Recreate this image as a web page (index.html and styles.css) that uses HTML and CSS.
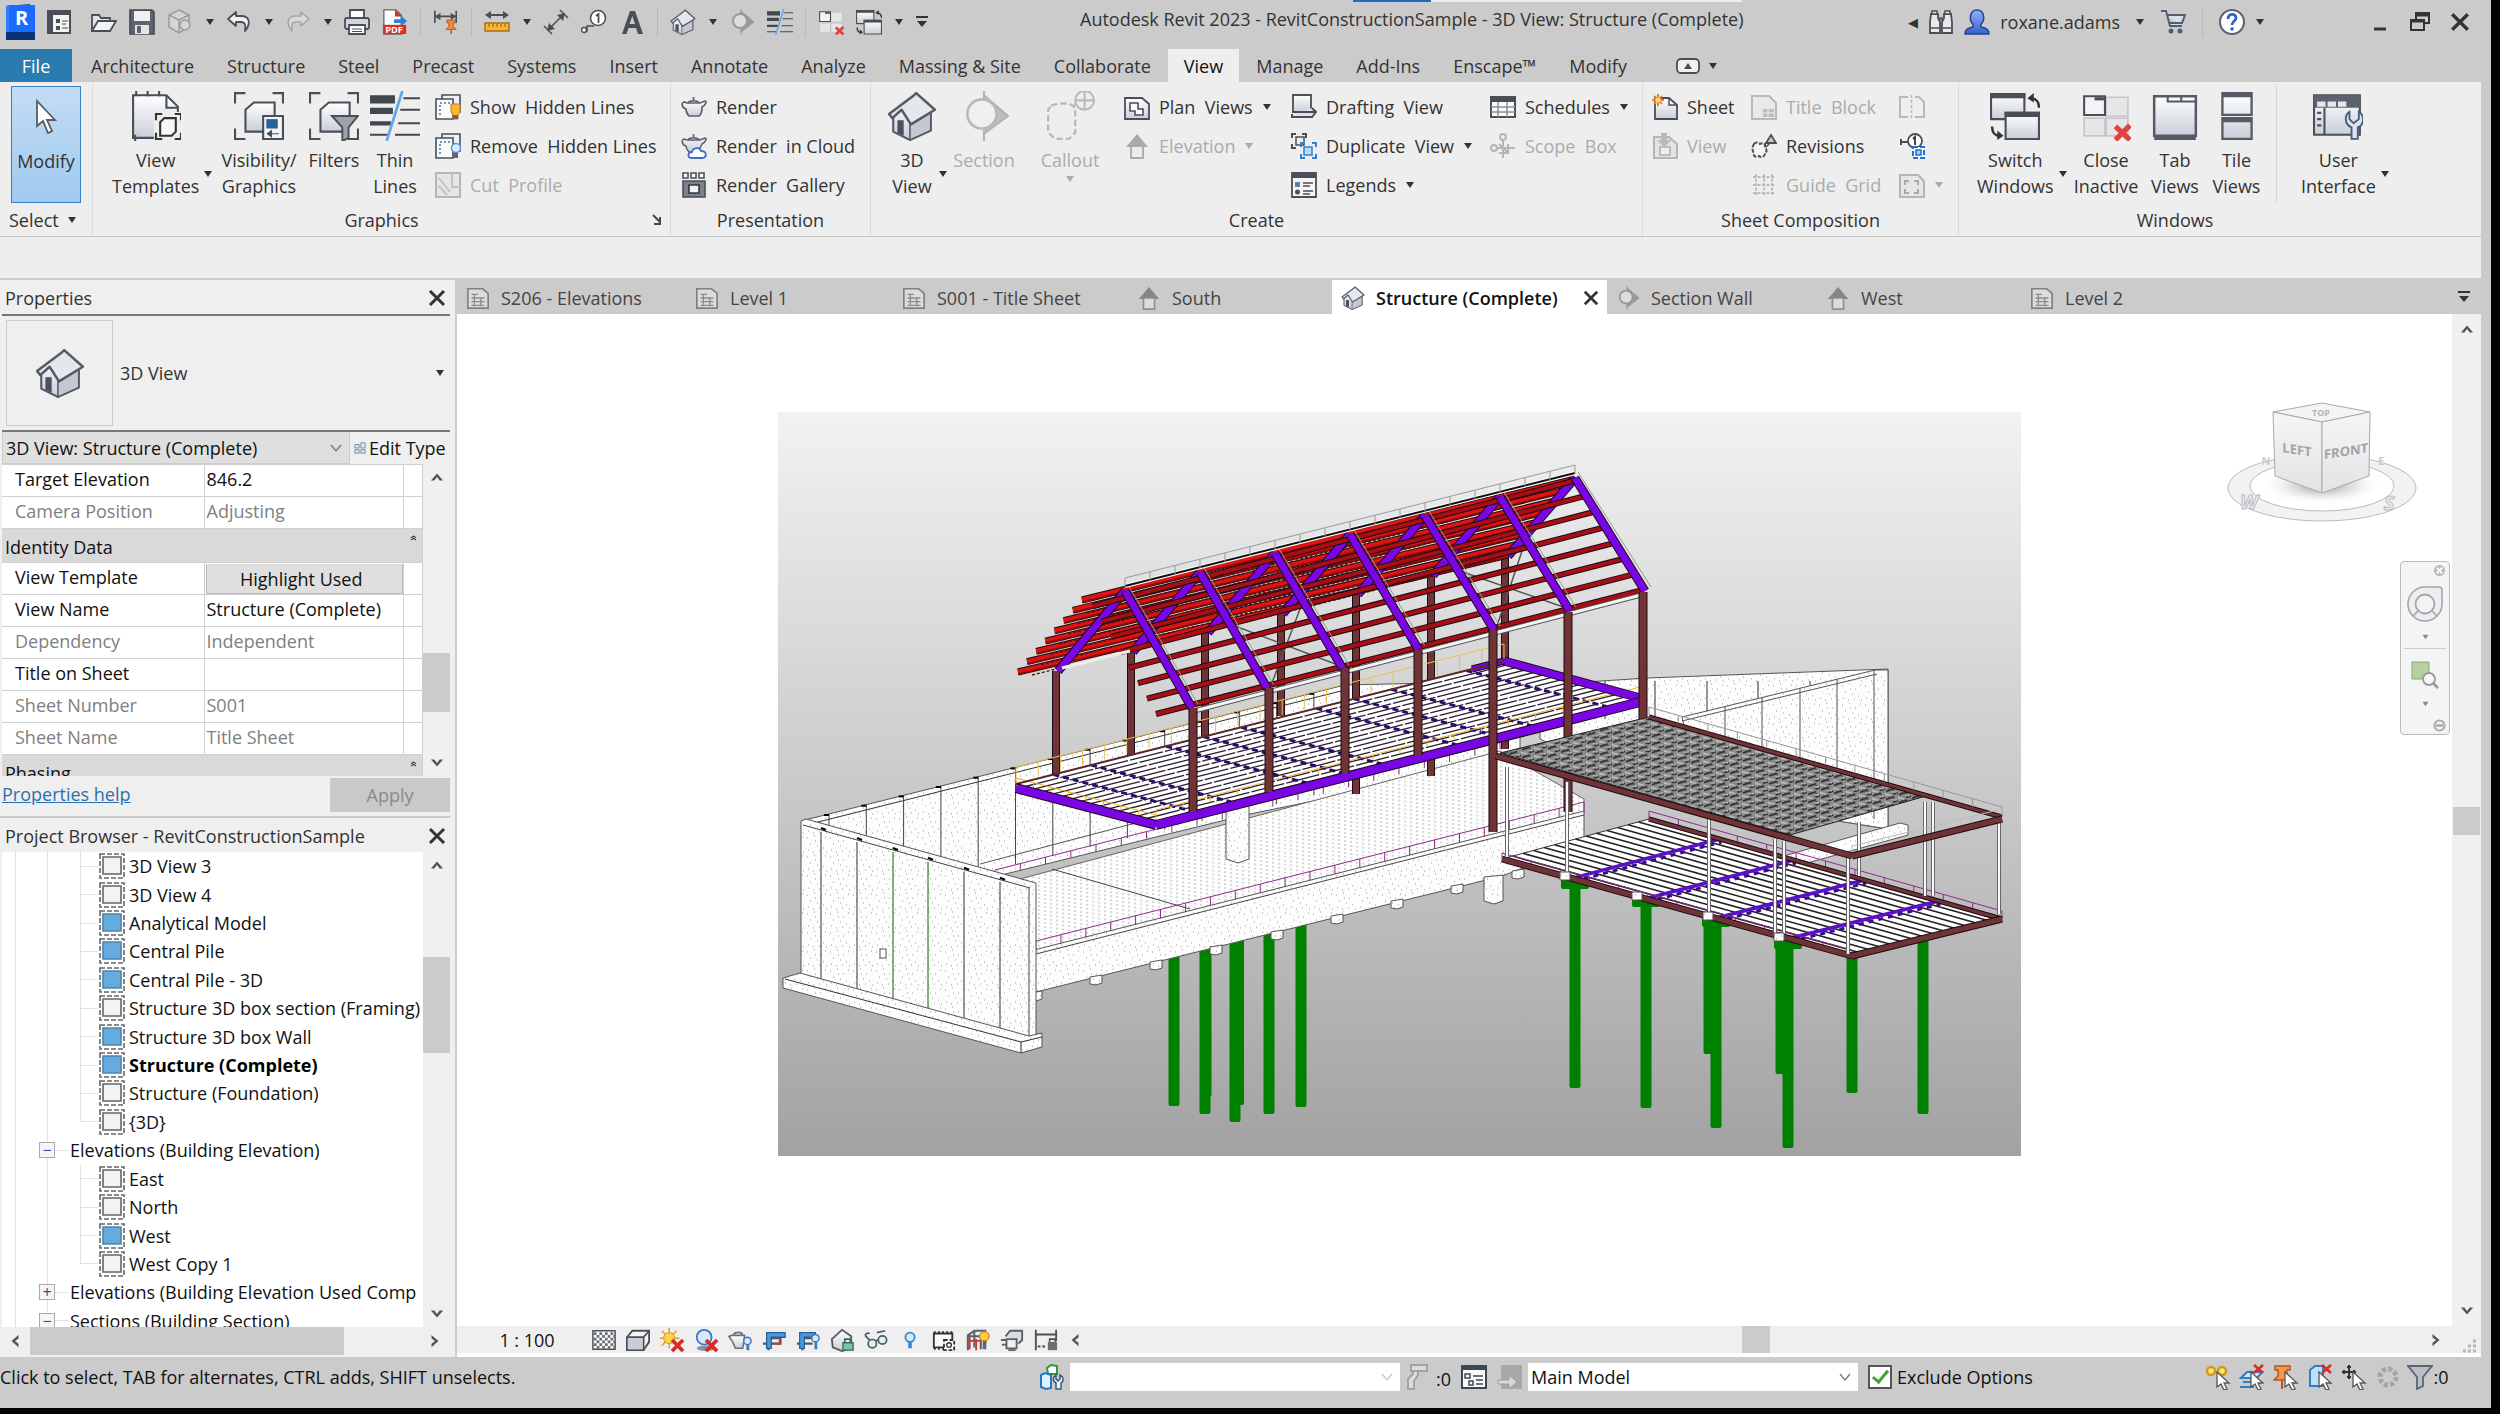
FILE: index.html
```html
<!DOCTYPE html>
<html lang="en">
<head>
    <meta charset="UTF-8">
    <meta name="viewport" content="width=device-width, initial-scale=1.0">
    <title>Autodesk Revit 2023 - RevitConstructionSample</title>
    <link rel="stylesheet" href="styles.css">
</head>
<body>
    <!-- icon sprite -->
    <svg class="sprite" aria-hidden="true">
        <defs>
            <linearGradient id="g-steel" x1="0" y1="0" x2="0" y2="1"><stop offset="0" stop-color="#fff"/><stop offset="1" stop-color="#c9ced8"/></linearGradient>
            <linearGradient id="g-blue" x1="0" y1="0" x2="0" y2="1"><stop offset="0" stop-color="#8fb0ff"/><stop offset="1" stop-color="#3a63c8"/></linearGradient>
        </defs>
        <symbol id="arrow" viewBox="0 0 10 8"><path d="M1 1h8L5 7z" fill="currentColor"/></symbol>
        <symbol id="chev-up" viewBox="0 0 16 16"><path d="M1 12L8 4l7 8h-4L8 8l-3 4z" fill="#555"/></symbol>
        <symbol id="chev-down" viewBox="0 0 16 16"><path d="M1 4l7 8 7-8h-4L8 8 5 4z" fill="#555"/></symbol>
        <symbol id="chev-left" viewBox="0 0 16 16"><path d="M12 1L4 8l8 7v-4L8 8l4-3z" fill="#555"/></symbol>
        <symbol id="chev-right" viewBox="0 0 16 16"><path d="M4 1l8 7-8 7v-4l4-3-4-3z" fill="#555"/></symbol>
        <symbol id="caret" viewBox="0 0 14 14"><path d="M2 4l5 6 5-6" fill="none" stroke="#777" stroke-width="1.3"/></symbol>
        <symbol id="close" viewBox="0 0 18 18"><path d="M2 2l14 14M16 2L2 16" stroke="#333" stroke-width="3" fill="none"/></symbol>
        <symbol id="overflow" viewBox="0 0 14 14"><path d="M1 2h12" stroke="#333" stroke-width="2"/><path d="M2 6h10l-5 6z" fill="#333"/></symbol>

        <symbol id="i-logo" viewBox="0 0 32 36"><path d="M2 2L26 0v28L2 36z" fill="#0c4fc4"/><path d="M5 1h26v27H5z" fill="#1a6bff"/><path d="M2 28h29v8H2z" fill="#0a3278"/><path d="M2 2l3-1v27H2z" fill="#2f7dff"/></symbol>
        <symbol id="i-home" viewBox="0 0 26 26"><path d="M2 2h22v22H2z" fill="#f2f2f2" stroke="#4a4f57" stroke-width="2"/><path d="M2 2h22v4H2zM2 6h5v18H2z" fill="#4a4f57"/><path d="M10 10h4v4h-4zM10 17h4v4h-4z" fill="#4a4f57"/><path d="M16 12h6M16 19h6M16 15h4" stroke="#4a4f57"/></symbol>
        <symbol id="i-open" viewBox="0 0 26 26"><path d="M1 22V6h7l2 3h9v4" fill="#dfe2e8" stroke="#4a4f57" stroke-width="1.8"/><path d="M1 22l6-10h18l-6 10z" fill="#f3f4f6" stroke="#4a4f57" stroke-width="1.8"/></symbol>
        <symbol id="i-save" viewBox="0 0 26 26"><path d="M1 1h22l2 2v22H1z" fill="#5d646f" stroke="#454a52" stroke-width="1.6"/><path d="M5 2h16v10H5z" fill="#eef0f3"/><path d="M6 16h14v9H6z" fill="#e3e5e9"/><path d="M8 17h4v7H8z" fill="#5d646f"/></symbol>
        <symbol id="i-sync" viewBox="0 0 26 26"><g fill="#d5d5d5" stroke="#9b9b9b" stroke-width="1.5"><path d="M12 1l10 5v12l-10 6-10-6V6z"/><path d="M2 6l10 5 10-5M12 11v13"/><circle cx="18" cy="16" r="5"/></g></symbol>
        <symbol id="i-undo" viewBox="0 0 26 26"><path d="M10 3L2 10l8 7v-4h5c4 0 5 3 4 9 6-7 5-15-4-15h-5z" fill="#f1f1f1" stroke="#4a4f57" stroke-width="1.8" stroke-linejoin="round"/></symbol>
        <symbol id="i-redo" viewBox="0 0 26 26"><path d="M16 3l8 7-8 7v-4h-5c-4 0-5 3-4 9C1 15 2 7 11 7h5z" fill="#dadada" stroke="#a5a5a5" stroke-width="1.6" stroke-linejoin="round"/></symbol>
        <symbol id="i-print" viewBox="0 0 26 26"><path d="M6 9V1h14v8" fill="#fff" stroke="#4a4f57" stroke-width="1.8"/><rect x="1" y="9" width="24" height="11" rx="2" fill="#d3d6dc" stroke="#4a4f57" stroke-width="1.8"/><path d="M5 16h16v9H5z" fill="#fff" stroke="#4a4f57" stroke-width="1.8"/><path d="M8 20h10M8 22.500h10" stroke="#4a4f57"/></symbol>
        <symbol id="i-aligndim" viewBox="0 0 28 28"><path d="M2 2v13M25 2v13M3 8h21" stroke="#4a4f57" stroke-width="1.8"/><path d="M2 8l6-4v8zM25 8l-6-4v8z" fill="#4a4f57"/><path d="M15 12h9v3h-2v4l3 3H14l3-3v-4h-2z" fill="#f38b3c" stroke="#b9551a"/><path d="M19.500 22v5" stroke="#b9551a" stroke-width="1.6"/></symbol>
        <symbol id="i-measure" viewBox="0 0 26 26"><path d="M3 6h20" stroke="#4a4f57" stroke-width="2"/><path d="M1 6l6-4v8zM25 6l-6-4v8z" fill="#4a4f57"/><path d="M1 14h24v8H1z" fill="#f7b733" stroke="#a8721a" stroke-width="1.5"/><path d="M5 15v3M9 15v3M13 15v3M17 15v3M21 15v3" stroke="#8a5b10"/></symbol>
        <symbol id="i-dim" viewBox="0 0 26 26"><path d="M5 21L21 5M17 1l8 8M1 17l8 8" stroke="#4a4f57" stroke-width="1.6"/><path d="M22 4l-2 8-6-6zM4 22l2-8 6 6z" fill="#4a4f57"/></symbol>
        <symbol id="i-tag" viewBox="0 0 26 26"><path d="M1 22h5v-5h7" fill="none" stroke="#4a4f57" stroke-width="1.6"/><circle cx="3" cy="21" r="2.500" fill="#fff" stroke="#4a4f57" stroke-width="1.500"/><circle cx="17" cy="9" r="7.500" fill="#fff" stroke="#4a4f57" stroke-width="1.600"/><path d="M15 7l2.500-2v9" fill="none" stroke="#4a4f57" stroke-width="1.8"/></symbol>
        <symbol id="i-text" viewBox="0 0 26 26"><path d="M3 25L11 2h5l8 23h-5l-2-6H9.500l-2 6zM10.500 15h5.500L13.300 7z" fill="#4a4f57"/></symbol>
        <symbol id="i-house" viewBox="0 0 48 48"><path d="M6 22v17l16 8 20-9V20L28 8z" fill="url(#g-steel)" stroke="#555b66" stroke-width="2"/><path d="M22 47V30l20-11v19z" fill="#c3c8d1" stroke="#555b66" stroke-width="1.500"/><path d="M2 22L26 4l2-2 18 16-23 14-9-14-9 8z" fill="#e4e7ec" stroke="#555b66" stroke-width="2.400" stroke-linejoin="round"/><path d="M10 28h6v15l-6-3z" fill="#4a505c"/></symbol>
        <symbol id="i-section" viewBox="0 0 48 48"><path d="M24 0v48M24 4l23 20-23 17z" fill="#bdbdbd" stroke="#b3b3b3" stroke-width="2"/><circle cx="22" cy="22" r="14" fill="#efefef" stroke="#b9b9b9" stroke-width="2.500"/></symbol>
        <symbol id="i-sectiontab" viewBox="0 0 26 26"><path d="M12 0v26M12 2l13 11-13 10z" fill="#999" stroke="#999"/><circle cx="11" cy="12" r="7" fill="#ddd" stroke="#999" stroke-width="2"/></symbol>
        <symbol id="i-thin" viewBox="0 0 48 48"><path d="M0 4h24v8H0zM0 16h22v6H0zM0 29h20v4H0zM0 41h18v2H0z" fill="#434850"/><path d="M32 7h16M29 18h19M27 31h21M24 42h24" stroke="#434850" stroke-width="2"/><path d="M31 0L16 48" stroke="#63a4ee" stroke-width="2.600"/></symbol>
        <symbol id="i-closewin" viewBox="0 0 48 48"><g fill="#e6e6e8" stroke="#c6c6c8" stroke-width="1.600"><path d="M24 6h21v18H24zM3 26h20v17H3zM24 26h21v17H24z"/></g><path d="M3 5h20v18H3z" fill="#f4f4f6" stroke="#4a4f57" stroke-width="2"/><path d="M13 6h9v3h-9z" fill="#4a4f57"/><path d="M33 34l14 13M47 33L33 47" stroke="#e2413c" stroke-width="5"/></symbol>
        <symbol id="i-switch" viewBox="0 0 48 48"><path d="M1 3h32v24H1z" fill="url(#g-steel)" stroke="#4a4f57" stroke-width="2"/><path d="M0 2h34v5H0z" fill="#4a4f57"/><path d="M15 21h32v25H15z" fill="url(#g-steel)" stroke="#4a4f57" stroke-width="2"/><path d="M14 20h34v5H14z" fill="#4a4f57"/><path d="M38 7c7 0 9 3 9 9M2 34c0 6 2 9 8 9" fill="none" stroke="#333" stroke-width="2.400"/><path d="M36 7l6-5v9zM13 43l-6-5v9z" fill="#333"/></symbol>

        <symbol id="i-bino" viewBox="0 0 26 26"><path d="M3 5h7v4l2 4v11H2V13zM23 5h-7v4l-2 4v11h10V13z" fill="#e8e8e8" stroke="#4a4f57" stroke-width="1.800"/><path d="M4 2h5v3H4zM17 2h5v3h-5zM12 9h2v6h-2z" fill="#e8e8e8" stroke="#4a4f57" stroke-width="1.500"/><path d="M3 19h8M15 19h8" stroke="#4a4f57" stroke-width="1.500"/></symbol>
        <symbol id="i-user" viewBox="0 0 26 26"><path d="M1 25c0-5 3-6 8-7v-3C5 12 5 1 13 1s8 11 4 14v3c5 1 8 2 8 7z" fill="url(#g-blue)" stroke="#274291" stroke-width="1.500"/></symbol>
        <symbol id="i-cart" viewBox="0 0 26 26"><path d="M1 2h5l4 15h12M7 6h18l-3 8H9" fill="#d9e0f0" stroke="#565d70" stroke-width="2"/><circle cx="11" cy="22" r="2.500" fill="#565d70"/><circle cx="20" cy="22" r="2.500" fill="#565d70"/></symbol>
        <symbol id="i-help" viewBox="0 0 26 26"><circle cx="13" cy="13" r="12" fill="#fff" stroke="#596070" stroke-width="2"/><path d="M9 10c0-6 8-6 8-1 0 3-4 3-4 7" fill="none" stroke="#2968c8" stroke-width="2.800"/><circle cx="13" cy="20" r="1.800" fill="#2968c8"/></symbol>
        <symbol id="i-min" viewBox="0 0 20 20"><path d="M4 17h12" stroke="#333" stroke-width="3"/></symbol>
        <symbol id="i-restore" viewBox="0 0 20 20"><path d="M6 7V1h13v10h-5" fill="none" stroke="#333" stroke-width="2"/><path d="M6 3h13" stroke="#333" stroke-width="3"/><path d="M1 8h13v10H1z" fill="none" stroke="#333" stroke-width="2"/><path d="M1 9h13" stroke="#333" stroke-width="3"/></symbol>
        <symbol id="i-pill" viewBox="0 0 24 16"><rect x="1" y="1" width="22" height="14" rx="4" fill="#f0f0f0" stroke="#4a4f57" stroke-width="1.800"/><path d="M8 11l4-6 4 6z" fill="#4a4f57"/></symbol>

        <symbol id="i-cursor" viewBox="0 0 24 36"><path d="M3 2v25l6-5 5 12 4-2-5-11h8z" fill="#fff" stroke="#555c68" stroke-width="1.800"/></symbol>
        <symbol id="i-template" viewBox="0 0 48 48"><path d="M2 4h32l11 11v30H2z" fill="url(#g-steel)" stroke="#4a4f57" stroke-width="2"/><path d="M5 0v5M16 0v5M27 0v5M4 42v6M34 4v12h11" fill="none" stroke="#4a4f57" stroke-width="2"/><path d="M22 20h26v28H22z" fill="#eee"/><path d="M24 28v-6h6M42 22h6v6M24 40v6h6M42 46h6v-6" fill="none" stroke="#333" stroke-width="2"/><path d="M28 30l4-4h11v13l-4 4H28z" fill="#f7f7f9" stroke="#333" stroke-width="2"/></symbol>
        <symbol id="i-visibility" viewBox="0 0 48 48"><path d="M1 12V2h10M37 2h10v10M1 36v10h10M37 46h10V36" fill="none" stroke="#4a4f57" stroke-width="2"/><path d="M11 18l8-7h20v20l-8 8H11z" fill="url(#g-steel)" stroke="#4a4f57" stroke-width="2"/><path d="M28 24h19v22H28z" fill="#f4f4f4" stroke="#4a4f57" stroke-width="2"/><path d="M31 27h11v9H31z" fill="#2b5f9c"/><path d="M32 41h11M32 41l4-3v6z" stroke="#4a4f57" fill="#4a4f57"/></symbol>
        <symbol id="i-filters" viewBox="0 0 48 48"><path d="M1 12V2h10M37 2h10v10M1 36v10h10M37 46h10V36" fill="none" stroke="#4a4f57" stroke-width="2"/><path d="M11 18l8-7h20v20l-8 8H11z" fill="url(#g-steel)" stroke="#4a4f57" stroke-width="2"/><path d="M22 24h25l-9 11v10l-6 3V35z" fill="#9ca2ad" stroke="#4a4f57" stroke-width="1.800"/></symbol>
        <symbol id="i-showhid" viewBox="0 0 26 26"><path d="M7 1h18v17H7z" fill="#eef0f3" stroke="#4a4f57" stroke-width="1.600"/><path d="M1 5h17v20H1z" fill="#fafafa" stroke="#4a4f57" stroke-width="1.600"/><path d="M5 21V9h13" fill="none" stroke="#3d78bd" stroke-dasharray="2 2" stroke-width="1.500"/><path d="M16 10h9v8l-2 3v4h-5v-4l-2-3z" fill="#ffb52e" stroke="#c8761a"/><path d="M18 21h5v4h-5z" fill="#666"/></symbol>
        <symbol id="i-remhid" viewBox="0 0 26 26"><path d="M7 1h18v17H7z" fill="#eef0f3" stroke="#4a4f57" stroke-width="1.600"/><path d="M1 5h17v20H1z" fill="#fafafa" stroke="#4a4f57" stroke-width="1.600"/><path d="M5 21V9h13" fill="none" stroke="#3d78bd" stroke-dasharray="2 2" stroke-width="1.500"/><circle cx="21" cy="15" r="4.500" fill="#dceaff" stroke="#5a8fd8" stroke-width="1.500"/><path d="M18 20h5v5h-5z" fill="#666"/></symbol>
        <symbol id="i-cut" viewBox="0 0 26 26"><path d="M1 1h24v24H1z" fill="#e6e6e6" stroke="#b5b5b5" stroke-width="2"/><path d="M17 1v14h8M4 6l11 14M4 14l8 9" fill="none" stroke="#c3c3c3" stroke-width="2"/></symbol>
        <symbol id="i-teapot" viewBox="0 0 26 26"><path d="M6 9h13l5-2c2 0 1 4-3 6 0 5-1 8-3 9H8C6 20 5 18 5 15c-4-1-5-6-2-7z" fill="url(#g-steel)" stroke="#5b6068" stroke-width="1.700"/><path d="M7 9c1-3 10-3 11 0M12.500 6V3" fill="none" stroke="#5b6068" stroke-width="1.700"/></symbol>
        <symbol id="i-cloudpot" viewBox="0 0 26 26"><path d="M6 7h13l5-2c2 0 1 4-3 6l-4 8H8C6 17 5 15 5 13 1 12 0 7 3 6zM7 7c1-3 10-3 11 0M12.500 4V1" fill="url(#g-steel)" stroke="#5b6068" stroke-width="1.600"/><path d="M10 25c-4-1-3-6 1-6 1-5 8-5 9-1 6 0 6 6 2 7z" fill="#fff" stroke="#3a6fd0" stroke-width="1.800"/></symbol>
        <symbol id="i-gallery" viewBox="0 0 26 26"><path d="M2 1h5v5H2zM10 1h5v5h-5zM18 1h5v5h-5z" fill="#fff" stroke="#4a4f57" stroke-width="1.600"/><path d="M2 9h22v16H2z" fill="#7c828d" stroke="#4a4f57" stroke-width="1.600"/><path d="M8 13h10v8H8z" fill="#f2f2f2" stroke="#33373d" stroke-width="1.600"/></symbol>
        <symbol id="i-callout" viewBox="0 0 48 48"><path d="M6 14l7-2h10l6 4v24l-6 6H10l-7-6V18z" fill="none" stroke="#b9b9b9" stroke-width="2.200" stroke-dasharray="6 3"/><path d="M26 15l9-6" stroke="#b9b9b9" stroke-width="2"/><circle cx="38" cy="9" r="9" fill="#eee" stroke="#b9b9b9" stroke-width="2"/><path d="M38 0v18M29 9h18" stroke="#b9b9b9" stroke-width="2"/></symbol>
        <symbol id="i-plan" viewBox="0 0 26 26"><path d="M1 4h17l7 6v15H1z" fill="url(#g-steel)" stroke="#4a4f57" stroke-width="1.800"/><path d="M6 9h8v6h5v6h-8v-4H6z" fill="#fff" stroke="#4a4f57" stroke-width="1.600"/></symbol>
        <symbol id="i-elev" viewBox="0 0 26 26"><path d="M13 1l11 13H2z" fill="#a9a9a9"/><path d="M7 13h12v12H7z" fill="#ececec" stroke="#a9a9a9" stroke-width="1.800"/></symbol>
        <symbol id="i-elevtab" viewBox="0 0 26 26"><path d="M13 1l11 13H2z" fill="#858585"/><path d="M7 13h12v12H7z" fill="#dcdcdc" stroke="#8f8f8f" stroke-width="1.800"/></symbol>
        <symbol id="i-draft" viewBox="0 0 26 26"><path d="M2 1h18v17H2z" fill="url(#g-steel)" stroke="#4a4f57" stroke-width="1.800"/><path d="M1 18h24M21 14l4 4-4 5H1v-3" fill="#dfe2e7" stroke="#4a4f57" stroke-width="2"/></symbol>
        <symbol id="i-dup" viewBox="0 0 26 26"><path d="M1 5V1h4M11 1h4v4M1 11v4h4" fill="none" stroke="#4a4f57" stroke-width="2"/><path d="M5 4h8v8H5z" fill="#eee" stroke="#4a4f57" stroke-width="1.500"/><path d="M10 14v-4h4M21 10h4v4M10 21v4h4M21 25h4v-4" fill="none" stroke="#2a84d2" stroke-width="2"/><path d="M13 14h8v8h-8z" fill="#b9dcfa" stroke="#2a84d2" stroke-width="1.500"/></symbol>
        <symbol id="i-legend" viewBox="0 0 26 26"><path d="M1 1h24v24H1z" fill="#f4f4f5" stroke="#4a4f57" stroke-width="1.800"/><path d="M1 1h24v5H1z" fill="#4a4f57"/><path d="M4 10h5v5H4z" fill="#5a7fa8"/><circle cx="6.500" cy="20" r="2.500" fill="#4a4f57"/><path d="M12 11h10M12 14h7M12 19h10M12 22h7" stroke="#4a4f57" stroke-width="1.500"/></symbol>
        <symbol id="i-sched" viewBox="0 0 26 26"><path d="M1 3h24v20H1z" fill="#fafafa" stroke="#4a4f57" stroke-width="2"/><path d="M1 3h24v5H1z" fill="#4a4f57"/><path d="M1 13h24M1 18h24M8 8v15M17 8v15" stroke="#8a9099" stroke-width="1.500"/></symbol>
        <symbol id="i-scope" viewBox="0 0 26 26"><g fill="none" stroke="#b5b5b5" stroke-width="2"><circle cx="13" cy="4" r="3"/><circle cx="4" cy="15" r="3"/><path d="M13 7v18M7 15h18M9 11l8 8M9 20h9v-9"/></g></symbol>
        <symbol id="i-sheet" viewBox="0 0 26 26"><path d="M3 4h14l8 7v14H3z" fill="url(#g-steel)" stroke="#4a4f57" stroke-width="1.800"/><path d="M17 4v7h8" fill="none" stroke="#4a4f57" stroke-width="1.500"/><path d="M6 0v12M0 6h12M2 2l8 8M10 2l-8 8" stroke="#e8832c" stroke-width="2"/><circle cx="6" cy="6" r="2.500" fill="#ffd982"/></symbol>
        <symbol id="i-placeview" viewBox="0 0 26 26"><path d="M2 4h15l8 7v14H2z" fill="#e4e4e4" stroke="#b5b5b5" stroke-width="2"/><path d="M9 0h6v7h5l-8 7-7-7h4z" fill="#bbb"/><path d="M8 14h10v8H8z" fill="#eee" stroke="#b0b0b0" stroke-width="1.600"/></symbol>
        <symbol id="i-title" viewBox="0 0 26 26"><path d="M1 2h17l7 7v16H1z" fill="#e9e9e9" stroke="#b9b9b9" stroke-width="2"/><path d="M12 15h11v8H12z" fill="#bdbdbd"/><path d="M12 19h11M17 15v8" stroke="#eee"/></symbol>
        <symbol id="i-rev" viewBox="0 0 26 26"><path d="M3 11c2-3 5-1 6 0 3-2 6 0 5 3 2 2 2 5 0 6 0 4-4 5-6 3-3 2-6 0-5-3-2-2-2-6 0-9z" fill="#f5f5f5" stroke="#4a4f57" stroke-width="2" stroke-dasharray="4 1.500"/><path d="M20 2l5 8H15z" fill="#c7c7c7" stroke="#4a4f57" stroke-width="1.800"/><path d="M15 14l4-4" stroke="#4a4f57" stroke-width="1.500"/></symbol>
        <symbol id="i-grid" viewBox="0 0 26 26"><path d="M2 5h22M2 13h22M2 21h22M5 2v22M13 2v22M21 2v22" stroke="#b9b9b9" stroke-width="1.800" stroke-dasharray="3 1.500"/></symbol>
        <symbol id="i-match" viewBox="0 0 26 26"><path d="M9 3H1v20h8M16 3h4l5 5v15h-9" fill="none" stroke="#b9b9b9" stroke-width="2"/><path d="M12.500 1v24" stroke="#b9b9b9" stroke-width="1.500" stroke-dasharray="3 2"/></symbol>
        <symbol id="i-viewref" viewBox="0 0 26 26"><path d="M1 9h8M2 6v6" stroke="#4a4f57" stroke-width="2"/><circle cx="16" cy="8" r="7" fill="#fff" stroke="#4a4f57" stroke-width="1.800"/><path d="M14 6l2-2v8" fill="none" stroke="#333" stroke-width="1.800"/><path d="M14 14h11v11H14z" fill="#fff" stroke="#1d6fd0" stroke-width="2" stroke-dasharray="5 2"/><path d="M17 17h5v5h-5z" fill="#a6cef5" stroke="#1d6fd0" stroke-width="1.500"/></symbol>
        <symbol id="i-viewport" viewBox="0 0 26 26"><path d="M1 3h18l6 6v16H1z" fill="#e6e6e6" stroke="#b5b5b5" stroke-width="2"/><path d="M6 13V9h4M15 9h4v4M6 17v4h4M15 21h4v-4" fill="none" stroke="#aaa" stroke-width="2"/></symbol>
        <symbol id="i-tabview" viewBox="0 0 48 48"><path d="M4 5h40v38H4z" fill="url(#g-steel)" stroke="#555a63" stroke-width="2.400"/><path d="M4 43h40v4H4z" fill="#555a63"/><path d="M17 5v5h27M30 5v5" fill="none" stroke="#555a63" stroke-width="2"/></symbol>
        <symbol id="i-tile" viewBox="0 0 48 48"><path d="M10 2h28v21H10zM10 26h28v20H10z" fill="url(#g-steel)" stroke="#555a63" stroke-width="2.200"/><path d="M10 2h28v4H10zM10 26h28v4H10z" fill="#555a63"/></symbol>
        <symbol id="i-ui" viewBox="0 0 48 48"><path d="M1 4h44v38H1z" fill="url(#g-steel)" stroke="#4a4f57" stroke-width="2"/><path d="M1 4h44v12H1z" fill="#5d636e"/><path d="M4 10h8v5H4zM14 10h8v5h-8zM24 10h8v5h-8z" fill="#e6e8ec"/><path d="M11 16v26M4 21h4M4 27h4M4 33h4" stroke="#4a4f57" stroke-width="2"/><path d="M35 20v7l4 4 5-4v-7c6 4 5 13-1 15v11h-6V35c-7-3-7-12-2-15z" fill="#dbe3f2" stroke="#4c5b78" stroke-width="1.800"/></symbol>
        <symbol id="i-launch" viewBox="0 0 10 12"><path d="M1 1l7 7M8 3v7H2" fill="none" stroke="#444" stroke-width="2"/></symbol>

        <symbol id="i-plantab" viewBox="0 0 26 26"><path d="M2 3h16l6 5v16H2z" fill="#dcdcdc" stroke="#808080" stroke-width="1.800"/><path d="M6 9h7M6 13h14M6 17h14M6 21h14M9 9v13M16 13v9" stroke="#8c8c8c" stroke-width="1.400"/></symbol>
        <symbol id="i-edittype" viewBox="0 0 14 14"><path d="M1 3h5v4H1zM8 1h5v6H8zM1 9h5v4H1zM8 9h5v4H8z" fill="#dde9f5" stroke="#6a7f99"/></symbol>
        <symbol id="i-view-off" viewBox="0 0 26 26"><path d="M1 1h24v24H1z" fill="#fff" stroke="#666" stroke-width="1.600" stroke-dasharray="5 2"/><path d="M4 4h18v17H4z" fill="#f3f3f3" stroke="#666" stroke-width="1.600"/></symbol>
        <symbol id="i-view-on" viewBox="0 0 26 26"><path d="M1 1h24v24H1z" fill="#fff" stroke="#666" stroke-width="1.600" stroke-dasharray="5 2"/><path d="M4 4h18v17H4z" fill="#64ace0" stroke="#4f84ab" stroke-width="1.600"/></symbol>

        <symbol id="v-detail" viewBox="0 0 26 26"><path d="M1 3h24v20H1z" fill="#fff" stroke="#4a4f57" stroke-width="1.600"/><path d="M2 6h22M2 12h22M2 18h22" stroke="#6a6f77" stroke-width="3" stroke-dasharray="3 3"/><path d="M5 9h20M5 15h20M5 21h20" stroke="#6a6f77" stroke-width="3" stroke-dasharray="3 3"/></symbol>
        <symbol id="v-box" viewBox="0 0 26 26"><path d="M1 10l6-7h18v12l-6 9H1z" fill="#f4f4f6" stroke="#4a4f57" stroke-width="2"/><path d="M1 10h18v14M19 10l6-7" fill="none" stroke="#4a4f57" stroke-width="2"/><path d="M2 11h16v12H2z" fill="#c9cdd5"/></symbol>
        <symbol id="v-sun" viewBox="0 0 26 26"><path d="M10 0v22M0 11h21M2 3l16 16M18 3L2 19" stroke="#e79a22" stroke-width="1.600"/><circle cx="10" cy="11" r="6" fill="#ffd24a" stroke="#d98b1c"/><path d="M13 13l12 12M25 13L13 25" stroke="#cf2f2b" stroke-width="4"/></symbol>
        <symbol id="v-shadow" viewBox="0 0 26 26"><ellipse cx="13" cy="22" rx="10" ry="3" fill="#8b8f96"/><circle cx="11" cy="10" r="8" fill="#d7e8fb" stroke="#3a78bd" stroke-width="2"/><path d="M13 13l12 12M25 13L13 25" stroke="#cf2f2b" stroke-width="4"/></symbol>
        <symbol id="v-render" viewBox="0 0 26 26"><path d="M4 8h14l-2 14H8L5 15 1 9z" fill="url(#g-steel)" stroke="#6a6f77" stroke-width="1.700"/><path d="M6 7c2-3 8-3 10 0" fill="none" stroke="#6a6f77" stroke-width="2"/><circle cx="21" cy="14" r="4" fill="#d7e8fb" stroke="#3a78bd" stroke-width="1.600"/><path d="M20 18h3v6h-3z" fill="#3a78bd"/></symbol>
        <symbol id="v-crop" viewBox="0 0 26 26"><path d="M1 17h19V9M7 24V11h13" fill="none" stroke="#555" stroke-width="2.400"/><path d="M5 22V5h20v5H10v12z" fill="#4b9ae0" stroke="#275f95" stroke-width="1.400"/><path d="M13 17h6v-4" fill="none" stroke="#d63a34" stroke-width="2"/></symbol>
        <symbol id="v-cropshow" viewBox="0 0 26 26"><path d="M1 17h17M7 24V11h13" fill="none" stroke="#555" stroke-width="2.400"/><path d="M4 22V5h17v5H9v12z" fill="#4b9ae0" stroke="#275f95" stroke-width="1.400"/><circle cx="21" cy="11" r="4" fill="#d7e8fb" stroke="#3a78bd" stroke-width="1.600"/><path d="M20 15h3v8h-3z" fill="#3a78bd"/></symbol>
        <symbol id="v-lock" viewBox="0 0 26 26"><path d="M2 12L13 2l10 7v13l-10 3-10-4z" fill="url(#g-steel)" stroke="#555a63" stroke-width="2"/><path d="M14 16h11v8H14z" fill="#7cc3a8" stroke="#3d6b5b" stroke-width="1.500"/><path d="M16 16v-4h6v4" fill="none" stroke="#3d6b5b" stroke-width="1.800"/></symbol>
        <symbol id="v-glasses" viewBox="0 0 26 26"><path d="M1 8l6 6M14 5l9-2M1 8c2-3 4-3 5-2M12 14l4-1" fill="none" stroke="#4a5a60" stroke-width="1.800"/><circle cx="9" cy="17" r="4.500" fill="#e2f1f3" stroke="#4a5a60" stroke-width="1.800"/><circle cx="20" cy="13" r="4.500" fill="#e2f1f3" stroke="#4a5a60" stroke-width="1.800"/></symbol>
        <symbol id="v-bulb" viewBox="0 0 26 26"><circle cx="13" cy="10" r="5" fill="#d7e8fb" stroke="#3a86dc" stroke-width="2"/><path d="M11 15h4v7h-4z" fill="#3a86dc"/></symbol>
        <symbol id="v-temp" viewBox="0 0 26 26"><path d="M2 6h20v15H2z" fill="#fafafa" stroke="#333" stroke-width="2"/><path d="M2 5h22M2 22h12" stroke="#333" stroke-width="3" stroke-dasharray="2 2.500"/><path d="M13 13h11v11H13z" fill="#fff" stroke="#333" stroke-width="2" stroke-dasharray="4 2"/><circle cx="18.500" cy="18.500" r="2.500" fill="none" stroke="#333" stroke-width="1.500"/></symbol>
        <symbol id="v-analytic" viewBox="0 0 26 26"><path d="M2 24V8l7-5h12v14M2 9h14M9 3v18M16 9v14" fill="none" stroke="#5b6068" stroke-width="2.200"/><path d="M1 14h14M4 10v13M11 12v12" stroke="#c63a33" stroke-width="2"/><circle cx="20" cy="9" r="5" fill="#ffd24a" stroke="#e08a1d" stroke-width="1.500"/><path d="M18 14h4v9h-4z" fill="#666"/></symbol>
        <symbol id="v-disp" viewBox="0 0 26 26"><path d="M6 9l5-6h13v10l-4 4M1 13h6M2 18h6M9 24h8" fill="#d9dce2" stroke="#5b6068" stroke-width="2"/><path d="M7 12h11v10H7z" fill="#eef0f3" stroke="#5b6068" stroke-width="2"/></symbol>
        <symbol id="v-constr" viewBox="0 0 26 26"><path d="M2 2v22M24 2v12M3 7h20" stroke="#4a4f57" stroke-width="2"/><path d="M4 20h10" stroke="#4a4f57" stroke-width="2" stroke-dasharray="3 2"/><path d="M15 15h10v9H15z" fill="#6a6f77"/><path d="M17 15v-3h6v3" fill="none" stroke="#4a4f57" stroke-width="1.800"/></symbol>

        <symbol id="s-worksets" viewBox="0 0 26 26"><path d="M8 4l4-3 6 1v8h-9z" fill="#fff" stroke="#2b9a3c" stroke-width="2"/><path d="M2 11l4-2 6 2v13l-5 1-5-2z" fill="#e4f1ff" stroke="#2079c8" stroke-width="2"/><path d="M17 11v4l2 2 2-2v-4c4 2 4 6 1 8v6h-5v-6c-4-2-3-6 0-8z" fill="#eef2f8" stroke="#3b5878" stroke-width="1.500"/></symbol>
        <symbol id="s-brush" viewBox="0 0 26 26"><path d="M6 1h16v6H6zM13 7v4l-4 6v8H3V15l5-5V7z" fill="#ddd" stroke="#a2a2a2" stroke-width="2"/></symbol>
        <symbol id="s-option" viewBox="0 0 26 26"><path d="M1 2h24v22H1z" fill="#fafafa" stroke="#3d4752" stroke-width="2"/><path d="M1 2h24v4H1z" fill="#3d4752"/><path d="M4 10h5v4H4zM8 17h4v4H8zM12 12h10M15 16h7M15 20h7" fill="#fff" stroke="#3d4752" stroke-width="1.500"/></symbol>
        <symbol id="s-add" viewBox="0 0 26 26"><path d="M4 1h21v24H4z" fill="#a8a8a8"/><path d="M1 16h11v-5l8 7-8 7v-5H1z" fill="#d8d8d8" stroke="#9a9a9a"/></symbol>
        <symbol id="s-ptr" viewBox="0 0 26 26"><path d="M12 8v15l4-3 3 6 3-1-3-6h5z" fill="#fff" stroke="#555" stroke-width="1.300"/></symbol>
        <symbol id="s-link" viewBox="0 0 26 26"><circle cx="6" cy="7" r="4" fill="#ffe07a" stroke="#d29a13" stroke-width="2.500"/><circle cx="17" cy="7" r="4" fill="#ffe07a" stroke="#d29a13" stroke-width="2.500"/><use href="#s-ptr"/></symbol>
        <symbol id="s-under" viewBox="0 0 26 26"><path d="M8 8h15l-5 6H2zM4 18h14M1 23h14" fill="#cfe6fb" stroke="#2f7dc2" stroke-width="2"/><path d="M15 1l9 8M24 1l-9 8" stroke="#cf2f2b" stroke-width="2.600"/><use href="#s-ptr"/></symbol>
        <symbol id="s-pin" viewBox="0 0 26 26"><path d="M2 2h15v4h-3v6l4 4H1l4-4V6H2z" fill="#f39a4a" stroke="#b9551a" stroke-width="1.500"/><path d="M9 16v9" stroke="#b9551a" stroke-width="2"/><use href="#s-ptr"/></symbol>
        <symbol id="s-face" viewBox="0 0 26 26"><path d="M3 6l5-4h8v20H3z" fill="#bfe0fa" stroke="#2f7dc2" stroke-width="2"/><path d="M15 1l9 8M24 1l-9 8" stroke="#cf2f2b" stroke-width="2.600"/><use href="#s-ptr"/></symbol>
        <symbol id="s-drag" viewBox="0 0 26 26"><path d="M8 1v14M1 8h14M6 3h4M6 13h4M3 6v4M13 6v4" stroke="#333" stroke-width="2"/><use href="#s-ptr"/></symbol>
        <symbol id="s-ring" viewBox="0 0 26 26"><circle cx="13" cy="13" r="8" fill="none" stroke="#a5a5a5" stroke-width="5" stroke-dasharray="4 2.280"/></symbol>
        <symbol id="s-filter" viewBox="0 0 26 26"><path d="M1 2h24l-9 11v9l-6 3V13z" fill="#b9bfc9" stroke="#5d636e" stroke-width="1.800"/></symbol>
    </svg>

    <div class="window">
        <header class="titlebar">
            <div class="qat">
                <span class="logo"><svg><use href="#i-logo"/></svg><b>R</b></span>
                <button class="q q-home" aria-label="Home"><svg><use href="#i-home"/></svg></button>
                <button class="q" aria-label="Open"><svg><use href="#i-open"/></svg></button>
                <button class="q" aria-label="Save"><svg><use href="#i-save"/></svg></button>
                <button class="q" aria-label="Synchronize"><svg><use href="#i-sync"/></svg></button>
                <button class="q-arrow" aria-label="Synchronize options"><svg><use href="#arrow"/></svg></button>
                <button class="q" aria-label="Undo"><svg><use href="#i-undo"/></svg></button>
                <button class="q-arrow" aria-label="Undo list"><svg><use href="#arrow"/></svg></button>
                <button class="q" aria-label="Redo"><svg><use href="#i-redo"/></svg></button>
                <button class="q-arrow" aria-label="Redo list"><svg><use href="#arrow"/></svg></button>
                <button class="q" aria-label="Print"><svg><use href="#i-print"/></svg></button>
                <button class="q" aria-label="Export PDF"><svg viewBox="0 0 28 28"><path d="M2 1h13l6 6v20H2z" fill="#fff" stroke="#666" stroke-width="1.400"/><path d="M14 1l8 7h-8z" fill="#d9302a"/><path d="M13 11h7V7l7 6-7 6v-4h-7z" fill="#2a84d2"/><path d="M1 17h25v10H1z" fill="#d9302a"/><text x="13" y="26" text-anchor="middle" class="pdf-text">PDF</text></svg></button>
                <span class="q-sep"></span>
                <button class="q" aria-label="Aligned Dimension"><svg><use href="#i-aligndim"/></svg></button>
                <span class="q-sep"></span>
                <button class="q" aria-label="Measure"><svg><use href="#i-measure"/></svg></button>
                <button class="q-arrow" aria-label="Measure options"><svg><use href="#arrow"/></svg></button>
                <button class="q" aria-label="Dimension"><svg><use href="#i-dim"/></svg></button>
                <button class="q" aria-label="Tag"><svg><use href="#i-tag"/></svg></button>
                <button class="q" aria-label="Text"><svg><use href="#i-text"/></svg></button>
                <span class="q-sep"></span>
                <button class="q" aria-label="Default 3D View"><svg><use href="#i-house"/></svg></button>
                <button class="q-arrow" aria-label="3D view options"><svg><use href="#arrow"/></svg></button>
                <button class="q" aria-label="Section"><svg><use href="#i-sectiontab"/></svg></button>
                <button class="q" aria-label="Thin Lines"><svg><use href="#i-thin"/></svg></button>
                <span class="q-sep"></span>
                <button class="q" aria-label="Close Inactive Views"><svg><use href="#i-closewin"/></svg></button>
                <button class="q" aria-label="Switch Windows"><svg><use href="#i-switch"/></svg></button>
                <button class="q-arrow" aria-label="Window list"><svg><use href="#arrow"/></svg></button>
                <button class="q-more" aria-label="Customize"><svg><use href="#overflow"/></svg></button>
            </div>
            <h1 class="title">Autodesk Revit 2023 - RevitConstructionSample - 3D View: Structure (Complete)</h1>
            <div class="account">
                <button class="a-back" aria-label="Collapse search">&#9664;</button>
                <button class="a-ico" aria-label="Search"><svg><use href="#i-bino"/></svg></button>
                <button class="a-user"><svg><use href="#i-user"/></svg><span>roxane.adams</span><svg class="arr"><use href="#arrow"/></svg></button>
                <button class="a-ico" aria-label="App Store"><svg><use href="#i-cart"/></svg></button>
                <span class="q-sep"></span>
                <button class="a-help" aria-label="Help"><svg><use href="#i-help"/></svg><svg class="arr"><use href="#arrow"/></svg></button>
            </div>
            <div class="wincontrols">
                <button aria-label="Minimize"><svg><use href="#i-min"/></svg></button>
                <button aria-label="Restore"><svg><use href="#i-restore"/></svg></button>
                <button aria-label="Close"><svg><use href="#close"/></svg></button>
            </div>
        </header>

        <nav class="tabs">
            <button class="tab file">File</button>
            <button class="tab">Architecture</button>
            <button class="tab">Structure</button>
            <button class="tab">Steel</button>
            <button class="tab">Precast</button>
            <button class="tab">Systems</button>
            <button class="tab">Insert</button>
            <button class="tab">Annotate</button>
            <button class="tab">Analyze</button>
            <button class="tab">Massing &amp; Site</button>
            <button class="tab">Collaborate</button>
            <button class="tab active">View</button>
            <button class="tab">Manage</button>
            <button class="tab">Add-Ins</button>
            <button class="tab">Enscape™</button>
            <button class="tab">Modify</button>
            <button class="tab-pill" aria-label="Minimize ribbon"><svg class="pill"><use href="#i-pill"/></svg><svg class="arr"><use href="#arrow"/></svg></button>
        </nav>

        <div class="ribbon">
            <section class="panel p-select">
                <div class="panel-body"><button class="big modify"><span class="stack"><svg class="cursor"><use href="#i-cursor"/></svg><span>Modify</span></span></button></div>
                <button class="panel-title">Select <svg class="arr"><use href="#arrow"/></svg></button>
            </section>
            <section class="panel p-graphics">
                <div class="panel-body">
                    <button class="big drop"><span class="stack"><svg><use href="#i-template"/></svg><span>View<br>Templates</span></span><svg class="arr"><use href="#arrow"/></svg></button>
                    <button class="big"><span class="stack"><svg><use href="#i-visibility"/></svg><span>Visibility/<br>Graphics</span></span></button>
                    <button class="big"><span class="stack"><svg><use href="#i-filters"/></svg><span>Filters</span></span></button>
                    <button class="big"><span class="stack"><svg><use href="#i-thin"/></svg><span>Thin<br>Lines</span></span></button>
                    <div class="col">
                        <button class="small"><svg><use href="#i-showhid"/></svg>Show  Hidden Lines</button>
                        <button class="small"><svg><use href="#i-remhid"/></svg>Remove  Hidden Lines</button>
                        <button class="small" disabled><svg><use href="#i-cut"/></svg>Cut  Profile</button>
                    </div>
                </div>
                <div class="panel-title">Graphics<button class="launcher" aria-label="Graphic display options"><svg><use href="#i-launch"/></svg></button></div>
            </section>
            <section class="panel p-present">
                <div class="panel-body">
                    <div class="col">
                        <button class="small"><svg><use href="#i-teapot"/></svg>Render</button>
                        <button class="small"><svg><use href="#i-cloudpot"/></svg>Render  in Cloud</button>
                        <button class="small"><svg><use href="#i-gallery"/></svg>Render  Gallery</button>
                    </div>
                </div>
                <div class="panel-title">Presentation</div>
            </section>
            <section class="panel p-create">
                <div class="panel-body">
                    <button class="big drop"><span class="stack"><svg><use href="#i-house"/></svg><span>3D<br>View</span></span><svg class="arr"><use href="#arrow"/></svg></button>
                    <button class="big" disabled><span class="stack"><svg><use href="#i-section"/></svg><span>Section</span></span></button>
                    <button class="big" disabled><span class="stack"><svg><use href="#i-callout"/></svg><span>Callout</span><svg class="arr"><use href="#arrow"/></svg></span></button>
                    <div class="col">
                        <button class="small"><svg><use href="#i-plan"/></svg>Plan  Views<svg class="arr"><use href="#arrow"/></svg></button>
                        <button class="small" disabled><svg><use href="#i-elev"/></svg>Elevation<svg class="arr"><use href="#arrow"/></svg></button>
                    </div>
                    <div class="col">
                        <button class="small"><svg><use href="#i-draft"/></svg>Drafting  View</button>
                        <button class="small"><svg><use href="#i-dup"/></svg>Duplicate  View<svg class="arr"><use href="#arrow"/></svg></button>
                        <button class="small"><svg><use href="#i-legend"/></svg>Legends<svg class="arr"><use href="#arrow"/></svg></button>
                    </div>
                    <div class="col">
                        <button class="small"><svg><use href="#i-sched"/></svg>Schedules<svg class="arr"><use href="#arrow"/></svg></button>
                        <button class="small" disabled><svg><use href="#i-scope"/></svg>Scope  Box</button>
                    </div>
                </div>
                <div class="panel-title">Create</div>
            </section>
            <section class="panel p-sheet">
                <div class="panel-body">
                    <div class="col">
                        <button class="small"><svg><use href="#i-sheet"/></svg>Sheet</button>
                        <button class="small" disabled><svg><use href="#i-placeview"/></svg>View</button>
                    </div>
                    <div class="col">
                        <button class="small" disabled><svg><use href="#i-title"/></svg>Title  Block</button>
                        <button class="small"><svg><use href="#i-rev"/></svg>Revisions</button>
                        <button class="small" disabled><svg><use href="#i-grid"/></svg>Guide  Grid</button>
                    </div>
                    <div class="col">
                        <button class="small" disabled aria-label="Matchline"><svg><use href="#i-match"/></svg></button>
                        <button class="small" aria-label="View Reference"><svg><use href="#i-viewref"/></svg></button>
                        <button class="small" disabled aria-label="Viewports"><svg><use href="#i-viewport"/></svg><svg class="arr"><use href="#arrow"/></svg></button>
                    </div>
                </div>
                <div class="panel-title">Sheet Composition</div>
            </section>
            <section class="panel p-windows">
                <div class="panel-body">
                    <button class="big drop"><span class="stack"><svg><use href="#i-switch"/></svg><span>Switch<br>Windows</span></span><svg class="arr"><use href="#arrow"/></svg></button>
                    <button class="big"><span class="stack"><svg><use href="#i-closewin"/></svg><span>Close<br>Inactive</span></span></button>
                    <button class="big"><span class="stack"><svg><use href="#i-tabview"/></svg><span>Tab<br>Views</span></span></button>
                    <button class="big"><span class="stack"><svg><use href="#i-tile"/></svg><span>Tile<br>Views</span></span></button>
                    <div class="ui-group"><button class="big drop"><span class="stack"><svg><use href="#i-ui"/></svg><span>User<br>Interface</span></span><svg class="arr"><use href="#arrow"/></svg></button></div>
                </div>
                <div class="panel-title">Windows</div>
            </section>
        </div>
        <div class="optionsbar"></div>

        <main class="workspace">
            <aside class="side">
                <section class="props">
                    <div class="side-head"><h2>Properties</h2><button aria-label="Close Properties"><svg><use href="#close"/></svg></button></div>
                    <button class="type-selector">
                        <span class="thumb-box"><svg><use href="#i-house"/></svg></span>
                        <span class="type-name">3D View</span>
                        <svg class="arr"><use href="#arrow"/></svg>
                    </button>
                    <div class="filter-row">
                        <div class="combo gray"><select aria-label="Properties filter"><option>3D View: Structure (Complete)</option></select><svg><use href="#caret"/></svg></div>
                        <button class="edit-type"><svg><use href="#i-edittype"/></svg>Edit Type</button>
                    </div>
                    <div class="props-scroll">
                        <div class="props-view">
                            <table class="props-table">
                                <tr><th>Target Elevation</th><td>846.2</td><td></td></tr>
                                <tr class="ro"><th>Camera Position</th><td>Adjusting</td><td></td></tr>
                                <tr class="group"><th colspan="3">Identity Data<span>&#xab;</span></th></tr>
                                <tr><th>View Template</th><td class="has-btn"><button>Highlight Used</button></td><td></td></tr>
                                <tr><th>View Name</th><td>Structure (Complete)</td><td></td></tr>
                                <tr class="ro"><th>Dependency</th><td>Independent</td><td></td></tr>
                                <tr><th>Title on Sheet</th><td></td><td></td></tr>
                                <tr class="ro"><th>Sheet Number</th><td>S001</td><td></td></tr>
                                <tr class="ro"><th>Sheet Name</th><td>Title Sheet</td><td></td></tr>
                                <tr class="group"><th colspan="3">Phasing<span>&#xab;</span></th></tr>
                            </table>
                        </div>
                        <div class="vscroll"><button aria-label="Scroll up"><svg><use href="#chev-up"/></svg></button><span class="track"><span class="thumb props-thumb"></span></span><button aria-label="Scroll down"><svg><use href="#chev-down"/></svg></button></div>
                    </div>
                    <div class="props-foot"><a href="#">Properties help</a><button disabled>Apply</button></div>
                </section>
                <section class="browser">
                    <div class="side-head"><h2>Project Browser - RevitConstructionSample</h2><button aria-label="Close Project Browser"><svg><use href="#close"/></svg></button></div>
                    <div class="tree-scroll">
                        <div class="tree-view">
                            <ul class="tree">
                                <li class="leaf"><svg><use href="#i-view-off"/></svg>3D View 3</li>
                                <li class="leaf"><svg><use href="#i-view-off"/></svg>3D View 4</li>
                                <li class="leaf"><svg><use href="#i-view-on"/></svg>Analytical Model</li>
                                <li class="leaf"><svg><use href="#i-view-on"/></svg>Central Pile</li>
                                <li class="leaf"><svg><use href="#i-view-on"/></svg>Central Pile - 3D</li>
                                <li class="leaf"><svg><use href="#i-view-off"/></svg>Structure 3D box section (Framing)</li>
                                <li class="leaf"><svg><use href="#i-view-on"/></svg>Structure 3D box Wall</li>
                                <li class="leaf current"><svg><use href="#i-view-on"/></svg>Structure (Complete)</li>
                                <li class="leaf"><svg><use href="#i-view-off"/></svg>Structure (Foundation)</li>
                                <li class="leaf last"><svg><use href="#i-view-off"/></svg>{3D}</li>
                                <li class="branch"><button aria-label="Collapse">−</button>Elevations (Building Elevation)</li>
                                <li class="leaf"><svg><use href="#i-view-off"/></svg>East</li>
                                <li class="leaf"><svg><use href="#i-view-off"/></svg>North</li>
                                <li class="leaf"><svg><use href="#i-view-on"/></svg>West</li>
                                <li class="leaf last"><svg><use href="#i-view-off"/></svg>West Copy 1</li>
                                <li class="branch"><button aria-label="Expand">+</button>Elevations (Building Elevation Used Comp</li>
                                <li class="branch"><button aria-label="Collapse">−</button>Sections (Building Section)</li>
                            </ul>
                        </div>
                        <div class="vscroll"><button aria-label="Scroll up"><svg><use href="#chev-up"/></svg></button><span class="track"><span class="thumb tree-thumb"></span></span><button aria-label="Scroll down"><svg><use href="#chev-down"/></svg></button></div>
                    </div>
                    <div class="hscroll"><button aria-label="Scroll left"><svg><use href="#chev-left"/></svg></button><span class="track"><span class="thumb tree-hthumb"></span></span><button aria-label="Scroll right"><svg><use href="#chev-right"/></svg></button></div>
                </section>
            </aside>

            <section class="views">
                <div class="view-tabs">
                    <button class="vtab"><svg><use href="#i-plantab"/></svg>S206 - Elevations</button>
                    <button class="vtab"><svg><use href="#i-plantab"/></svg>Level 1</button>
                    <button class="vtab"><svg><use href="#i-plantab"/></svg>S001 - Title Sheet</button>
                    <button class="vtab"><svg><use href="#i-elevtab"/></svg>South</button>
                    <div class="vtab active"><svg><use href="#i-house"/></svg>Structure (Complete)<button aria-label="Close view"><svg><use href="#close"/></svg></button></div>
                    <button class="vtab"><svg><use href="#i-sectiontab"/></svg>Section Wall</button>
                    <button class="vtab"><svg><use href="#i-elevtab"/></svg>West</button>
                    <button class="vtab"><svg><use href="#i-plantab"/></svg>Level 2</button>
                    <button class="vmore" aria-label="All views"><svg><use href="#overflow"/></svg></button>
                </div>
                <div class="canvas-row">
                    <div class="canvas">
                        <svg class="model" id="model" viewBox="778 413 1243 744" role="img" aria-label="Structure model"></svg>
                        <svg class="viewcube" viewBox="0 0 192 124">
                            <defs>
                                <linearGradient id="g-face" x1="0" y1="0" x2="0" y2="1"><stop offset="0" stop-color="#f6f6f7"/><stop offset="1" stop-color="#e2e3e5"/></linearGradient>
                                <radialGradient id="g-shade"><stop offset="0" stop-color="#888"/><stop offset="1" stop-color="#fff" stop-opacity="0"/></radialGradient>
                            </defs>
                            <ellipse cx="97" cy="87" rx="94" ry="33" fill="#f2f2f2" stroke="#bbb"/>
                            <ellipse cx="97" cy="85" rx="72" ry="25" fill="#fff" stroke="#bbb"/>
                            <ellipse cx="97" cy="84" rx="62" ry="20" fill="url(#g-shade)"/>
                            <path d="M48 11L97 2l48 9-48 10z" fill="#f4f4f5" stroke="#aaa"/>
                            <path d="M48 11l49 10v71L50 75z" fill="url(#g-face)" stroke="#aaa"/>
                            <path d="M145 11L97 21v71l47-17z" fill="url(#g-face)" stroke="#aaa"/>
                            <text x="96" y="15" class="cube-top">TOP</text>
                            <text x="72" y="42" transform="skewY(9)" class="cube-text">LEFT</text>
                            <text x="121" y="74" transform="skewY(-9)" class="cube-text">FRONT</text>
                            <text x="24" y="108" class="compass">W</text>
                            <text x="164" y="109" class="compass">S</text>
                            <text x="41" y="64" class="compass-far">N</text>
                            <text x="156" y="64" class="compass-far">E</text>
                        </svg>
                        <div class="navbar">
                            <button class="nav-x" aria-label="Close navigation bar"><svg viewBox="0 0 14 14"><circle cx="7" cy="7" r="6" fill="#bbb"/><path d="M4 4l6 6M10 4l-6 6" stroke="#fff" stroke-width="2"/></svg></button>
                            <button aria-label="Steering wheel"><svg class="wheel" viewBox="0 0 36 36"><path d="M18 1h14q3 0 3 3v14A17 17 0 1 1 18 1z" fill="#eceef1" stroke="#a2a7ae" stroke-width="1.600"/><circle cx="18" cy="18" r="9.500" fill="#f3f3f4" stroke="#a2a7ae" stroke-width="1.800"/><path d="M11 25l-5 5M25 25l5 5" stroke="#a2a7ae" stroke-width="1.600"/></svg></button>
                            <svg class="arr"><use href="#arrow"/></svg>
                            <hr>
                            <button aria-label="Zoom"><svg class="zoomer" viewBox="0 0 28 28"><path d="M1 1h17v17H1z" fill="#b5d1a0" stroke="#8aa878"/><circle cx="18" cy="18" r="6" fill="#f6f6f6" stroke="#999" stroke-width="1.800"/><path d="M22 22l5 5" stroke="#999" stroke-width="2.500"/></svg></button>
                            <svg class="arr"><use href="#arrow"/></svg>
                            <button class="nav-x nav-opt" aria-label="Navigation options"><svg viewBox="0 0 14 14"><circle cx="7" cy="7" r="5.500" fill="#eee" stroke="#aaa" stroke-width="2"/><path d="M3 7h8" stroke="#999" stroke-width="2"/></svg></button>
                        </div>
                    </div>
                    <div class="vscroll wide"><button aria-label="Scroll up"><svg><use href="#chev-up"/></svg></button><span class="track"><span class="thumb canvas-thumb"></span></span><button aria-label="Scroll down"><svg><use href="#chev-down"/></svg></button></div>
                </div>
                <div class="viewbar">
                    <button class="scale">1 : 100</button>
                    <button class="v" aria-label="Detail Level"><svg><use href="#v-detail"/></svg></button>
                    <button class="v" aria-label="Visual Style"><svg><use href="#v-box"/></svg></button>
                    <button class="v" aria-label="Sun Path"><svg><use href="#v-sun"/></svg></button>
                    <button class="v" aria-label="Shadows"><svg><use href="#v-shadow"/></svg></button>
                    <button class="v" aria-label="Rendering Dialog"><svg><use href="#v-render"/></svg></button>
                    <button class="v" aria-label="Crop View"><svg><use href="#v-crop"/></svg></button>
                    <button class="v" aria-label="Show Crop Region"><svg><use href="#v-cropshow"/></svg></button>
                    <button class="v" aria-label="Lock 3D View"><svg><use href="#v-lock"/></svg></button>
                    <button class="v" aria-label="Temporary Hide/Isolate"><svg><use href="#v-glasses"/></svg></button>
                    <button class="v" aria-label="Reveal Hidden Elements"><svg><use href="#v-bulb"/></svg></button>
                    <button class="v" aria-label="Temporary View Properties"><svg><use href="#v-temp"/></svg></button>
                    <button class="v" aria-label="Analytical Model"><svg><use href="#v-analytic"/></svg></button>
                    <button class="v" aria-label="Displacement Sets"><svg><use href="#v-disp"/></svg></button>
                    <button class="v" aria-label="Reveal Constraints"><svg><use href="#v-constr"/></svg></button>
                    <div class="hscroll"><button aria-label="Scroll left"><svg><use href="#chev-left"/></svg></button><span class="track"><span class="thumb view-hthumb"></span></span><button aria-label="Scroll right"><svg><use href="#chev-right"/></svg></button></div>
                    <svg class="grip" viewBox="0 0 14 14"><path d="M10 2h3M5 7h3M10 7h3M0 12h3M5 12h3M10 12h3" stroke="#b5b5b5" stroke-width="3"/></svg>
                </div>
            </section>
        </main>

        <footer class="status">
            <span class="hint">Click to select, TAB for alternates, CTRL adds, SHIFT unselects.</span>
            <button class="s" aria-label="Worksets"><svg><use href="#s-worksets"/></svg></button>
            <div class="combo workset"><select aria-label="Active workset"><option></option></select><svg><use href="#caret"/></svg></div>
            <button class="s" aria-label="Editing requests"><svg><use href="#s-brush"/></svg></button>
            <span class="zero">:0</span>
            <button class="s" aria-label="Design Options"><svg><use href="#s-option"/></svg></button>
            <button class="s" aria-label="Add to Set"><svg><use href="#s-add"/></svg></button>
            <div class="combo option"><select aria-label="Design option"><option>Main Model</option></select><svg><use href="#caret"/></svg></div>
            <label class="exclude"><input type="checkbox" checked>Exclude Options</label>
            <div class="toggles">
                <button class="s" aria-label="Select Links"><svg><use href="#s-link"/></svg></button>
                <button class="s" aria-label="Select Underlay"><svg><use href="#s-under"/></svg></button>
                <button class="s" aria-label="Select Pinned"><svg><use href="#s-pin"/></svg></button>
                <button class="s" aria-label="Select by Face"><svg><use href="#s-face"/></svg></button>
                <button class="s" aria-label="Drag on Selection"><svg><use href="#s-drag"/></svg></button>
                <button class="s" aria-label="Background Processes"><svg><use href="#s-ring"/></svg></button>
                <button class="s filter" aria-label="Filter"><svg><use href="#s-filter"/></svg>:0</button>
            </div>
        </footer>
    </div>
    <script src="script.js"></script>
</body>
</html>
```

FILE: styles.css
```css
* {
    box-sizing: border-box;
}
body {
    margin: 0;
    height: 100vh;
    background: #000;
    color: #333;
    font-family: "Open Sans", "Noto Sans", sans-serif;
    font-size: 18px;
    line-height: 26px;
    overflow: hidden;
}
button {
    border: 0;
    padding: 0;
    margin: 0;
    background: none;
    font: inherit;
    color: inherit;
}
h1, h2 {
    margin: 0;
    font-size: 18px;
    font-weight: normal;
}
svg {
    display: block;
    flex: none;
    width: 26px;
    height: 26px;
}
.arr {
    width: 10px;
    height: 8px;
}
.sprite {
    position: absolute;
    width: 0;
    height: 0;
}
.pdf-text {
    font: bold 10px "Open Sans", sans-serif;
    fill: #fff;
}
.window {
    display: flex;
    flex-direction: column;
    height: calc(100vh - 6px);
    margin-right: 9px;
    padding-right: 10px;
    background: #cbcbcb;
}

/* title bar */
.titlebar {
    display: flex;
    align-items: center;
    height: 49px;
    padding-bottom: 6px;
    background: linear-gradient(90deg, transparent 1353px, #1c6cc0 1353px, #1c6cc0 1431px, #eee 1431px, #eee 1742px, transparent 1742px) 0 0 / 100% 2px no-repeat;
}
.qat {
    display: flex;
    align-items: center;
}
.logo {
    display: grid;
    place-items: center;
    width: 40px;
    color: #fff;
    font-size: 20px;
    line-height: 28px;
}
.logo svg {
    width: 32px;
    height: 36px;
    grid-area: 1 / 1;
}
.logo b {
    grid-area: 1 / 1;
    padding-bottom: 8px;
    padding-left: 3px;
}
.q {
    display: flex;
    justify-content: center;
    width: 38px;
}
.q-home {
    margin-right: 7px;
}
.q-arrow {
    display: flex;
    justify-content: center;
    width: 21px;
}
.q-more svg {
    width: 14px;
    height: 14px;
}
.q-more {
    width: 26px;
    display: flex;
    justify-content: center;
}
.q-arrow svg {
    width: 10px;
    height: 8px;
}
.q-sep {
    width: 1px;
    height: 30px;
    margin: 0 6px;
    background: #b8b8b8;
}
.title {
    margin-left: 145px;
    padding-bottom: 6px;
    white-space: nowrap;
}
.account {
    display: flex;
    align-items: center;
    gap: 10px;
    margin-left: auto;
}
.a-back {
    font-size: 13px;
}
.a-user, .a-help {
    display: flex;
    align-items: center;
    gap: 10px;
}
.a-user .arr {
    margin: 0 5px;
}
.wincontrols {
    display: flex;
    align-items: center;
    gap: 20px;
    margin: 0 11px 0 105px;
}
.wincontrols svg {
    width: 20px;
    height: 20px;
}

/* ribbon tabs */
.tabs {
    display: flex;
    gap: 1px;
    height: 33px;
}
.tab {
    padding: 0 16px;
    line-height: 34px;
}
.tab.file {
    width: 72px;
    margin-right: 2px;
    background: #2a7bb0;
    color: #fff;
}
.tab.active {
    background: #eee;
    color: #111;
}
.tab-pill {
    display: flex;
    align-items: center;
    gap: 8px;
    margin-left: 32px;
}
.tab-pill .pill {
    width: 24px;
    height: 16px;
}

/* ribbon */
.ribbon {
    display: flex;
    height: 155px;
    background: #eee;
    border-bottom: 1px solid #c6c6c6;
}
.panel {
    display: flex;
    flex-direction: column;
    flex: none;
    padding-top: 4px;
    border-right: 1px solid #dcdcdc;
}
.panel-body {
    display: grid;
    flex: 1;
    justify-items: center;
    align-items: start;
}
.panel-title {
    position: relative;
    text-align: center;
    line-height: 32px;
}
.launcher {
    position: absolute;
    right: 8px;
    bottom: 10px;
}
.launcher svg {
    width: 10px;
    height: 12px;
}
.p-select {
    width: 93px;
}
.p-select .panel-title {
    display: flex;
    align-items: center;
    gap: 8px;
    padding-left: 9px;
}
.p-graphics {
    width: 578px;
}
.p-graphics .panel-body {
    grid-template-columns: 106px 82px 68px 54px 1fr;
    padding-left: 19px;
}
.p-graphics .col {
    margin-left: 13px;
}
.p-present {
    width: 200px;
}
.p-present .panel-body {
    padding-left: 10px;
}
.p-create {
    width: 772px;
}
.p-create .panel-body {
    grid-template-columns: 65px 64px 108px 167px 199px 1fr;
    padding-left: 16px;
}
.p-create .big.drop {
    gap: 1px;
}
.p-sheet {
    width: 316px;
}
.p-sheet .panel-body {
    grid-template-columns: 99px 148px 1fr;
    padding-left: 9px;
}
.p-windows {
    flex: 1;
    border-right: 0;
}
.p-windows .panel-body {
    grid-template-columns: 95px 68px 70px 53px 1fr;
    padding-left: 18px;
}
.p-windows .panel-title {
    padding-right: 90px;
}
.ui-group {
    justify-self: start;
    margin-left: 13px;
    padding-left: 24px;
    border-left: 1px solid #d4d4d4;
}
.big {
    display: flex;
    height: 117px;
    padding-top: 5px;
}
.big.drop {
    justify-self: start;
    gap: 4px;
}
.big.drop > .arr {
    margin-top: 79px;
}
.stack {
    display: flex;
    flex-direction: column;
    align-items: center;
    gap: 6px;
}
.stack svg {
    width: 50px;
    height: 50px;
}
.stack .arr {
    width: 10px;
    height: 8px;
    margin-top: -4px;
}
.stack .cursor {
    width: 24px;
    height: 36px;
    margin: 7px 0;
}
.modify {
    width: 70px;
    justify-content: center;
    background: linear-gradient(#c3dcf4, #9fcaef);
    border: 1px solid #3a7fc4;
}
.big:disabled, .small:disabled {
    color: #ababab;
}
.col {
    justify-self: start;
}
.small {
    display: flex;
    align-items: center;
    gap: 9px;
    height: 39px;
    padding-top: 3px;
    white-space: pre;
}
.optionsbar {
    height: 41px;
    margin-bottom: 2px;
    background: #eee;
}

/* workspace */
.workspace {
    display: flex;
    flex: 1;
    min-height: 0;
}
.side {
    display: flex;
    flex-direction: column;
    flex: none;
    width: 457px;
    padding-right: 5px;
    background: #efefef;
    border-right: 2px solid #ccc;
}
.side-head {
    display: flex;
    align-items: center;
    justify-content: space-between;
    height: 34px;
    padding: 2px 4px 0 5px;
}
.side-head svg {
    width: 18px;
    height: 18px;
}
.type-selector {
    display: flex;
    align-items: center;
    width: 448px;
    height: 118px;
    margin-left: 2px;
    padding: 0 4px;
    border-top: 2px solid #777;
    border-bottom: 2px solid #777;
    text-align: left;
}
.thumb-box {
    display: grid;
    place-items: center;
    width: 107px;
    height: 106px;
    border: 1px solid #ccc;
}
.thumb-box svg {
    width: 50px;
    height: 50px;
}
.type-name {
    flex: 1;
    padding-left: 7px;
}
.type-selector .arr {
    width: 12px;
}
.filter-row {
    display: flex;
    height: 32px;
    margin-left: 2px;
    color: #111;
}
.combo {
    display: flex;
    align-items: center;
    background: #fff;
}
.combo select {
    flex: 1;
    height: 100%;
    padding: 0 3px;
    border: 0;
    background: transparent;
    appearance: none;
    font: inherit;
    color: #111;
}
.combo svg {
    width: 14px;
    height: 14px;
    margin-right: 6px;
}
.combo.gray {
    width: 348px;
    background: #dfdfdf;
    border: 1px solid #ccc;
    border-top: 0;
}
.edit-type {
    display: flex;
    align-items: center;
    gap: 3px;
    padding-left: 4px;
}
.edit-type svg {
    width: 12px;
    height: 14px;
}
.props-scroll {
    display: flex;
    height: 312px;
    margin-left: 2px;
}
.props-view {
    flex: 1;
    overflow: hidden;
    background: #fff;
}
.props-table {
    width: 100%;
    border-collapse: collapse;
    table-layout: fixed;
    color: #111;
}
.props-table tr {
    height: 32px;
}
.props-table .group {
    height: 34px;
}
.props-table th, .props-table td {
    padding: 0 0 4px 2px;
    border: 1px solid #d0d0d0;
    border-left: 0;
    font-weight: normal;
    text-align: left;
    line-height: 24px;
    white-space: nowrap;
}
.props-table th {
    width: 202px;
    padding-left: 13px;
}
.props-table td:last-child {
    width: 19px;
}
.props-table .ro {
    color: #808080;
}
.props-table .group th {
    padding: 2px 0 0 3px;
    background: #d9d9d9;
}
.props-table .group span {
    float: right;
    margin-right: 2px;
    font-size: 12px;
    line-height: 12px;
    writing-mode: vertical-rl;
}
.props-table .has-btn {
    padding: 0 0 0 1px;
}
.has-btn button {
    display: block;
    width: 100%;
    height: 30px;
    background: #dfdfdf;
    border: 1px solid #bbb;
    border-top-color: #ddd;
    padding-right: 6px;
}
.vscroll {
    display: flex;
    flex-direction: column;
    flex: none;
    align-items: center;
    width: 27px;
    padding: 6px 0;
    background: #f0f0f0;
}
.vscroll svg, .hscroll svg {
    width: 14px;
    height: 14px;
}
.vscroll .track {
    position: relative;
    flex: 1;
    width: 27px;
}
.hscroll {
    display: flex;
    align-items: center;
    height: 30px;
    padding: 0 8px 2px;
}
.hscroll .track {
    position: relative;
    flex: 1;
    height: 100%;
}
.thumb {
    position: absolute;
    background: #cbcbcb;
}
.vscroll .thumb {
    left: 0;
    right: 0;
}
.hscroll .thumb {
    top: 0;
    bottom: 0;
}
.props-thumb {
    top: 62%;
    height: 59px;
}
.tree-thumb {
    top: 19.5%;
    height: 96px;
}
.canvas-thumb {
    top: 48.7%;
    height: 28px;
}
.tree-hthumb {
    left: 2%;
    width: 314px;
}
.view-hthumb {
    left: 49%;
    width: 28px;
}
.props-foot {
    display: flex;
    justify-content: space-between;
    height: 42px;
    padding: 2px 0 4px 2px;
    border-bottom: 2px solid #c8c8c8;
}
.props-foot a {
    color: #2a6fae;
    line-height: 32px;
}
.props-foot button {
    width: 120px;
    background: #c9c9c9;
    color: #8a8a8a;
}
.browser {
    display: flex;
    flex-direction: column;
    flex: 1;
    min-height: 0;
}
.tree-scroll {
    display: flex;
    flex: 1;
    min-height: 0;
    margin-left: 2px;
}
.tree-view {
    flex: 1;
    overflow: hidden;
    background: #fff;
}
.tree {
    display: grid;
    grid-auto-rows: 1fr;
    height: 483px;
    margin: 0;
    padding: 0;
    list-style: none;
    color: #111;
}
.tree li {
    display: flex;
    align-items: center;
    gap: 4px;
    white-space: nowrap;
    background-repeat: no-repeat;
    background-image: linear-gradient(#e2e2e2, #e2e2e2), linear-gradient(#e2e2e2, #e2e2e2), linear-gradient(#e2e2e2, #e2e2e2), linear-gradient(#e2e2e2, #e2e2e2);
}
.tree .leaf {
    padding-left: 97px;
    background-position: 13px 0, 45px 0, 78px 0, 78px 50%;
    background-size: 1px 100%, 1px 100%, 1px 100%, 18px 1px;
}
.tree .last {
    background-size: 1px 100%, 1px 100%, 1px 50%, 18px 1px;
}
.tree .branch {
    gap: 15px;
    padding-left: 37px;
    background-position: 13px 0, 45px 0, 0 0, 45px 50%;
    background-size: 1px 100%, 1px 100%, 0 0, 22px 1px;
}
.tree .branch button {
    width: 16px;
    height: 16px;
    border: 1px solid #aaa;
    background: #f5f5f5;
    color: #2b4f9a;
    font-size: 16px;
    line-height: 12px;
}
.tree .current {
    font-weight: bold;
    color: #000;
}

/* view windows */
.views {
    display: flex;
    flex-direction: column;
    flex: 1;
    min-width: 0;
}
.view-tabs {
    display: grid;
    grid-template-columns: 229px 207px 235px 204px 275px 210px 204px 1fr 34px;
    height: 34px;
}
.vtab {
    display: flex;
    align-items: center;
    gap: 10px;
    padding: 2px 0 0 8px;
    color: #444;
}
.vtab.active {
    background: #fff;
    color: #111;
    font-weight: 600;
}
.vtab > svg {
    width: 26px;
    height: 24px;
}
.vtab button {
    margin-left: auto;
    margin-right: 8px;
}
.vtab button svg {
    width: 16px;
    height: 16px;
}
.vmore svg {
    width: 14px;
    height: 14px;
    margin: auto;
}
.canvas-row {
    display: flex;
    flex: 1;
    min-height: 0;
    background: #fff;
}
.canvas {
    position: relative;
    flex: 1;
}
/* the crop region, viewcube and navigation bar float on the drawing area */
.model {
    position: absolute;
    left: 321px;
    top: 98px;
    width: 1243px;
    height: 744px;
    background: linear-gradient(#f2f2f2, #d2d2d2 40%, #a2a2a2);
}
.viewcube {
    position: absolute;
    right: 35px;
    top: 87px;
    width: 192px;
    height: 124px;
}
.cube-text {
    font-size: 13px;
    font-weight: bold;
    text-anchor: middle;
    fill: #a0a3a8;
}
.cube-top {
    font-size: 9px;
    font-weight: bold;
    text-anchor: middle;
    fill: #b0b3b8;
}
.compass {
    font-size: 20px;
    font-weight: bold;
    font-style: italic;
    text-anchor: middle;
    fill: #eee;
    stroke: #bbb;
}
.compass-far {
    font-size: 11px;
    font-weight: bold;
    text-anchor: middle;
    fill: #ccc;
}
.navbar {
    position: absolute;
    right: 2px;
    top: 247px;
    display: flex;
    flex-direction: column;
    align-items: center;
    gap: 12px;
    width: 50px;
    height: 174px;
    padding: 2px 3px;
    background: #f4f4f4;
    border: 1px solid #bbb;
    border-radius: 4px;
    color: #888;
}
.navbar .arr {
    width: 9px;
    height: 6px;
}
.navbar hr {
    width: 100%;
    margin: -4px 0 0;
    border: 0;
    border-top: 1px solid #ccc;
}
.nav-x {
    align-self: flex-end;
    margin-bottom: -3px;
}
.nav-x svg {
    width: 13px;
    height: 13px;
}
.nav-opt {
    margin: auto 0 0;
}
.wheel {
    width: 36px;
    height: 36px;
}
.zoomer {
    width: 28px;
    height: 28px;
}
.vscroll.wide {
    width: 29px;
    padding: 8px 0;
}
.viewbar {
    display: flex;
    align-items: center;
    height: 31px;
    background: #efefef;
    border-bottom: 4px solid #fff;
}
.scale {
    width: 130px;
    padding-left: 10px;
    color: #111;
}
.v {
    display: flex;
    justify-content: center;
    width: 34px;
}
.v svg {
    width: 26px;
    height: 24px;
}
.viewbar .hscroll {
    flex: 1;
    height: 27px;
    padding: 0 20px 0 5px;
}
.grip {
    align-self: end;
    width: 14px;
    height: 14px;
    margin-right: 4px;
}

/* status bar */
.status {
    display: flex;
    align-items: center;
    height: 51px;
    padding: 2px 0 14px;
    background: #cbcbcb;
    color: #111;
}
.hint {
    width: 1034px;
    white-space: nowrap;
}
.s {
    display: flex;
    align-items: center;
    justify-content: center;
    width: 36px;
}
.combo.workset, .combo.option {
    width: 330px;
    height: 28px;
}
.combo.workset svg {
    opacity: 0.4;
}
.zero {
    width: 20px;
    padding-top: 4px;
    white-space: nowrap;
}
.exclude {
    display: flex;
    align-items: center;
    gap: 5px;
    margin-left: 10px;
}
.exclude input {
    display: grid;
    place-items: center;
    width: 24px;
    height: 24px;
    margin: 0;
    appearance: none;
    background: #fff;
    border: 2px solid #555;
}
.exclude input:checked::after {
    content: "";
    width: 6px;
    height: 13px;
    margin-bottom: 3px;
    border: solid #3fa535;
    border-width: 0 3px 3px 0;
    transform: rotate(40deg);
}
.toggles {
    display: flex;
    margin-left: auto;
    margin-right: 30px;
}
.toggles .s {
    width: 34px;
}
.toggles .s.filter {
    width: 46px;
}
```

FILE: script.js
```js
const model = document.getElementById("model");
const out = [];

const mix = (a, b, t) => [a[0] + (b[0] - a[0]) * t, a[1] + (b[1] - a[1]) * t];
const add = (a, x, y) => [a[0] + x, a[1] + y];
const pts = list => list.map(p => p[0].toFixed(1) + "," + p[1].toFixed(1)).join(" ");

function line(a, b, color, width, extra) {
    out.push(`<path d="M${pts([a])}L${pts([b])}" stroke="${color}" stroke-width="${width}" ${extra || ""}/>`);
}
function poly(list, fill, stroke) {
    out.push(`<polygon points="${pts(list)}" fill="${fill}" stroke="${stroke || "none"}"/>`);
}
// a steel member: dark edge with a coloured core
function beam(a, b, color, width) {
    line(a, b, "#1c0a14", width + 1);
    line(a, b, color, width - 1);
}
function concrete(list) {
    poly(list, "#fdfdfd");
    poly(list, "url(#speckle)", "#555");
}
function pile(x, top, bottom, w) {
    out.push(`<rect x="${x - w / 2}" y="${top}" width="${w}" height="${bottom - top}" rx="2" fill="#008000"/>`);
}
// guard rail with little posts
function rail(a, b, h, color, n) {
    line(add(a, 0, -h), add(b, 0, -h), color, 1);
    for (let i = 0; i <= n; i++) {
        const p = mix(a, b, i / n);
        line(p, add(p, 0, -h), color, 1);
    }
}

out.push(`<defs>
<pattern id="speckle" width="23" height="19" patternUnits="userSpaceOnUse">
<path d="M2 3h1M9 1h1M15 6h1M20 2h1M5 9h1M12 11h1M18 13h1M3 15h1M8 17h1M21 17h1M14 16h1M10 6h1" stroke="#999" stroke-width="1"/></pattern>
<pattern id="deck" width="6" height="4" patternUnits="userSpaceOnUse" patternTransform="skewY(8)">
<path d="M0 1h2" stroke="#aaa" stroke-width="1"/></pattern>
<pattern id="mesh" width="13" height="8" patternUnits="userSpaceOnUse" patternTransform="skewY(15)">
<rect width="13" height="8" fill="#8d8d8d"/><path d="M1 7L9 2M8 8l5-3" stroke="#111" stroke-width="1.300"/><path d="M0 2h6M7 5h5" stroke="#e4e4e4" stroke-width="1"/><path d="M3 4h7" stroke="#333" stroke-width="1"/></pattern>
</defs>`);

// far retaining walls
concrete([[1540, 686], [1647, 679], [1888, 670], [1888, 830], [1640, 790], [1540, 740]]);
[1553, 1605, 1655, 1707, 1758, 1810].forEach(x => line([x, 682], [x, 720], "#333", 1));
concrete([[1682, 718], [1875, 671], [1888, 671], [1888, 830], [1700, 800]]);
line([1682, 722], [1877, 675], "#555", 1);
[1725, 1762, 1800, 1837, 1874].forEach(x => line([x, 718 - (x - 1682) * 0.243], [x, 820], "#555", 1));

// long wall behind the slab
concrete([[801, 822], [1345, 686], [1520, 682], [1520, 760], [1250, 815], [985, 880]]);
line([806, 826], [1345, 691], "#333", 1);
for (let x = 829; x < 1345; x += 37.3) {
    const y = 822 - (x - 801) * 0.25;
    line([x, y], [x, Math.min(y + 110, 872 - (x - 985) * 0.23)], "#444", 1);
    line([x - 5, y + 1], [x, y + 1], "#000", 2);
}

// ground slab
poly([[1005, 884], [1500, 752], [1584, 800], [1584, 815], [1036, 955]], "#fff");
poly([[1005, 884], [1500, 752], [1584, 800], [1584, 815], [1036, 955]], "url(#deck)", "#666");
line([980, 865], [1500, 728], "#555", 1);
line([1052, 870], [1190, 910], "#444", 1);
rail([995, 878], [1500, 750], 7, "#8c2d8c", 20);

// piles under the long beam
pile(1174, 955, 1107, 11);
pile(1205, 945, 1115, 11);
pile(1207, 945, 1098, 9);
pile(1235, 935, 1123, 11);
pile(1238, 935, 1106, 12);
pile(1269, 930, 1115, 11);
pile(1301, 920, 1108, 11);

// long beam and its blocks
concrete([[1030, 952], [1584, 812], [1584, 846], [1502, 877], [1470, 885], [1036, 993], [1030, 993]]);
line([1032, 956], [1584, 816], "#444", 1);
rail([1036, 951], [1584, 812], 9, "#8c2d8c", 22);
[[1036, 997], [1096, 981], [1156, 966], [1216, 951], [1277, 936], [1337, 920], [1397, 905], [1457, 890], [1518, 875]].forEach(p => {
    concrete([add(p, -6, -3), add(p, 6, -5), add(p, 6, 3), add(p, 0, 5), add(p, -6, 4)]);
});
concrete([[1484, 878], [1503, 876], [1503, 902], [1494, 905], [1484, 902]]);
concrete([[1226, 805], [1249, 805], [1249, 860], [1238, 864], [1226, 860]]);

// front wall panels
concrete([[801, 822], [806, 820], [1036, 884], [1036, 1042], [1029, 1042], [801, 978]]);
line([803, 826], [1030, 889], "#444", 1);
line([1029, 888], [1029, 1042], "#444", 1);
[821, 857, 893, 928, 964, 1000].forEach(x => {
    const y = 828 + (x - 803) * 0.278;
    const green = x === 893 || x === 928;
    line([x, y], [x, y + 155], green ? "#0a640a" : "#333", 1);
    line([x, y - 4], [x + 5, y - 2], "#000", 2);
});
out.push(`<rect x="880" y="950" width="6" height="9" fill="#fff" stroke="#555"/>`);
concrete([[783, 979], [800, 974], [1029, 1037], [1042, 1034], [1042, 1048], [1021, 1054], [783, 989]]);
line([785, 980], [1021, 1043], "#333", 1);
line([1021, 1043], [1042, 1038], "#333", 1);
line([1021, 1043], [1021, 1054], "#333", 1);

// rear columns of the hall
const brown = "#703436";
[[1056, 672, 775], [1131, 652, 757], [1205, 633, 737], [1281, 615, 717], [1356, 595, 795], [1431, 577, 777], [1505, 557, 750]].forEach(c => beam([c[0], c[1]], [c[0], c[2]], brown, 7));
rail([1016, 783], [1504, 660], 15, "#e4c15a", 22);

// upper floor
const L = [1016, 785], F = [1156, 822], R = [1644, 698], B = [1504, 662];
poly([L, F, R, B], "#fff", "#333");
for (let i = 1; i < 15; i++) {
    line(mix(L, F, i / 15), mix(B, R, i / 15), "#2a2030", 1.3, `stroke-dasharray="34 2"`);
}
for (let i = 1; i < 13; i++) {
    if (i % 4 === 3) continue;
    line(mix(L, B, i / 13), mix(F, R, i / 13), "#2b0a70", 3, `stroke-dasharray="6 4"`);
}
rail(L, F, 6, "#e8b52c", 8);
rail(add(F, 0, -6), add(R, 0, -6), 5, "#e8b52c", 18);
beam(B, add(R, 0, 2), "#7a06e6", 8);
beam(B, add(B, -32, 8), "#7a06e6", 6);
line(L, B, "#5a2a2a", 2);
beam(add(L, 0, 4), add(F, 0, 4), "#7a06e6", 9);
beam(add(F, 0, 4), add(R, 0, 4), "#7a06e6", 9);

// roof: back slope, frames, front slope
const apex = [], front = [], back = [];
for (let i = 0; i < 7; i++) {
    apex.push(mix([1125, 592], [1575, 479], i / 6));
    front.push(mix([1192, 709], [1645, 592], i / 6));
    back.push(mix([1058, 672], [1508, 557], i / 6));
}
for (let i = 0; i < 8; i++) {
    const s = mix([1018, 673], [1082, 601], i / 7);
    const e = mix([1508, 556], [1575, 480], i / 7);
    beam(s, e, "#de1410", 6);
    line(add(s, 0, 2), add(e, 0, 2), "#8f0d0d", 1.5);
    if (i < 7) line(add(s, 14, 3), add(e, -12, 5), "#5c1010", 1.4, `stroke-dasharray="3 2"`);
}
apex.forEach((a, i) => beam(a, back[i], "#7a06e6", 8));
line([1235, 627], [1346, 669], "#555", 1.5);
line([1300, 610], [1270, 689], "#555", 1.5);
line([1460, 572], [1569, 610], "#555", 1.5);
line([1524, 546], [1496, 630], "#555", 1.5);
for (let i = 0; i < 8; i++) {
    beam(mix([1156, 715], [1093, 607], i / 7), mix([1643, 591], [1577, 481], i / 7), "#a80f14", 5);
}
line(add(front[0], 2, 3), add(front[6], 0, 3), "#555", 5);
line(add(front[0], 2, 3), add(front[6], 0, 3), "#f4f4f4", 3);
apex.forEach((a, i) => {
    beam(a, front[i], "#7a06e6", 8);
    line(add(a, 3, -6), add(front[i], 6, -4), "#999", 1);
});
line(add(apex[0], 0, -5), add(apex[6], 0, -5), "#fff", 4);
line(add(apex[0], 0, -5), add(apex[6], 0, -5), "#111", 2);
rail(add(apex[0], 0, -4), add(apex[6], 0, -4), 9, "#999", 18);
line([1062, 669], [1130, 652], "#eee", 3);

// front columns
[[1193, 709, 813], [1269, 689, 793], [1345, 669, 775], [1418, 651, 756], [1493, 631, 833], [1568, 613, 813], [1643, 593, 775]].forEach(c => beam([c[0], c[1]], [c[0], c[2]], brown, 8));

// terrace piles
pile(1575, 885, 1089, 11);
pile(1575, 880, 890, 28);
pile(1646, 900, 1109, 11);
pile(1646, 898, 908, 28);
pile(1709, 920, 1055, 11);
pile(1716, 920, 1129, 11);
pile(1716, 916, 928, 28);
pile(1781, 940, 1075, 11);
pile(1788, 940, 1149, 11);
pile(1788, 938, 950, 28);
pile(1852, 955, 1094, 11);
pile(1923, 940, 1115, 11);

// low terrace floor
const a = [1502, 860], f = [1852, 957], r = [2002, 920], k = [1649, 820];
concrete([[1780, 858], [1900, 824], [1908, 826], [1908, 836], [1800, 866]]);
poly([a, f, r, k], "#fff", "#333");
for (let i = 1; i < 14; i++) {
    line(mix(a, k, i / 14), mix(f, r, i / 14), "#222", 1.6);
}
[0.2, 0.41, 0.61, 0.82].forEach(t => {
    const s = mix(a, f, t), e = mix(k, r, t);
    line(s, e, "#5a10c8", 3.5);
    line(add(s, 2, 3), add(e, 2, 3), "#3a0a90", 3, `stroke-dasharray="5 5"`);
});
rail(a, f, 6, "#8c2d8c", 12);
rail(k, r, 8, "#8c2d8c", 12);
beam(k, r, brown, 4);
beam(a, f, brown, 6);
beam(f, r, brown, 6);

// posts, then the roof deck
[[1507, 768, 858], [1567, 783, 877], [1709, 820, 915], [1775, 840, 935], [1784, 842, 935], [1848, 858, 955], [1859, 823, 877], [1925, 803, 897], [1933, 803, 897], [1999, 823, 915]].forEach(c => {
    line([c[0], c[1]], [c[0], c[2]], "#444", 4);
    line([c[0], c[1]], [c[0], c[2]], "#fafafa", 2.4);
});
[[1565, 877], [1637, 897], [1708, 917], [1779, 938]].forEach(p => concrete([add(p, -5, -4), add(p, 5, -4), add(p, 5, 4), add(p, -5, 4)]));
poly([[1500, 754], [1649, 718], [1926, 797], [1790, 836]], "url(#mesh)", "#222");
beam([1649, 718], [2002, 818], brown, 4);
beam([1496, 757], [1852, 857], brown, 6);
beam([1852, 857], [2002, 820], brown, 6);
rail([1649, 716], [2002, 816], 8, "#999", 12);
rail([1852, 853], [2002, 816], 6, "#bbb", 5);

model.innerHTML = out.join("");
```
